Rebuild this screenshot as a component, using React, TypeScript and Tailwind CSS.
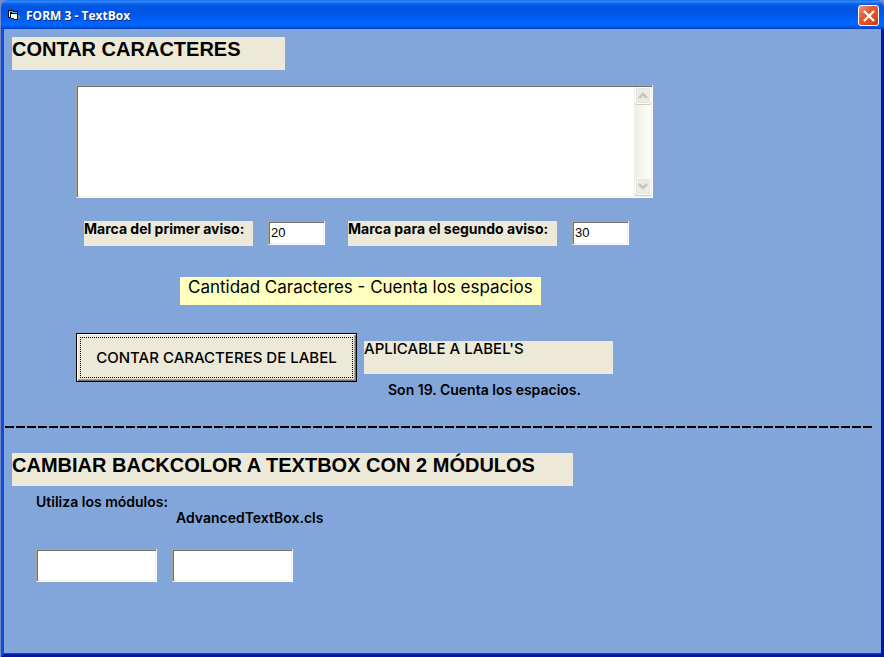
import React from "react";

const sunken =
  "border border-t-[#aca899] border-l-[#aca899] border-r-white border-b-white bg-white shadow-[inset_1px_1px_0_#716f64,inset_-1px_-1px_0_#f1efe2] outline-none";
const fieldText =
  "px-[2px] pb-[2px] font-['Liberation_Sans',sans-serif] text-[13px] leading-[18px] text-black";
const heading =
  "mt-2 ml-2 h-[33px] bg-[#ece9d8] font-['Liberation_Sans',sans-serif] text-xl leading-6 font-bold whitespace-nowrap";

function ScrollButton({ label, d }: { label: string; d: string }) {
  return (
    <button
      type="button"
      aria-label={label}
      className="flex h-[17px] w-[16px] items-center justify-center rounded-[2px] border border-white bg-[#ecebe4] shadow-[inset_0_0_0_1px_#e6e5dc,0_1px_0_#cfcdb8]"
    >
      <svg width="10" height="7" viewBox="0 0 10 7" fill="none" stroke="#c6c5bc" strokeWidth="2.6">
        <path d={d} />
      </svg>
    </button>
  );
}

function FormIcon() {
  return (
    <svg width="14" height="13" viewBox="0 0 14 13" shapeRendering="crispEdges" aria-hidden="true">
      <path d="M10 6l3 2-3 2z" fill="#8a8468" />
      <path d="M0 1h5v1h5v9H6v-1H3V9H0z" fill="#000" />
      <path d="M1 3h1v5H1zM3 5h6v5H6V9H3z" fill="#fff" />
      <path d="M1 2h4v1H1zM4 3h5v1H4z" fill="#38d6e0" />
    </svg>
  );
}

function TitleBar() {
  return (
    <header className="flex h-[29px] items-center rounded-t-[7px] bg-[linear-gradient(to_bottom,#0058e6_0px,#3a93ff_1px,#2a80f5_2px,#0762e8_4px,#0054e3_7px,#0055e5_13px,#0060f8_19px,#0066ff_24px,#0062f5_26px,#0046d0_28px,#003dbc_29px)] pt-[2px] pr-[5px] pl-[7px]">
      <FormIcon />
      <h1 className="ml-1 flex-1 font-['Open_Sans',sans-serif] text-[12px] leading-4 font-bold text-white [text-shadow:1px_1px_0_#0a2a80]">
        FORM 3 - TextBox
      </h1>
      <button
        type="button"
        aria-label="Cerrar"
        className="flex h-[21px] w-[21px] items-center justify-center rounded-[3px] border border-white bg-[linear-gradient(135deg,#eb9a80_0%,#e25a32_40%,#dd4a1c_75%,#b83a10_100%)]"
      >
        <svg width="12" height="12" viewBox="0 0 12 12" stroke="#fff" strokeWidth="2.2" aria-hidden="true">
          <path d="M1 1l10 10M11 1L1 11" />
        </svg>
      </button>
    </header>
  );
}

export default function App() {
  return (
    <div className="flex min-h-screen flex-col bg-[#7b88c8] pl-px font-[Inter,sans-serif] text-sm leading-4 font-semibold text-black">
      <TitleBar />
      <main className="flex flex-1 flex-col items-start border-x-[3px] border-b-[3px] border-r-[#0019a8] border-b-[#0019a8] border-l-[#0850e0] bg-[#83a6da] shadow-[inset_0_-1px_0_#0046e8]">
        <h2 className={"w-[273px] " + heading}>CONTAR CARACTERES</h2>

        <div className={"mt-[15px] ml-[72px] flex h-[113px] w-[577px] p-px " + sunken}>
          <textarea aria-label="Texto" className={"m-0 flex-1 resize-none overflow-hidden outline-none " + fieldText} />
          <div className="flex w-[17px] flex-col items-start justify-between bg-[linear-gradient(to_right,#eeede5,#fefefb)] pb-px pl-px">
            <ScrollButton label="Subir" d="M1 6l4-4 4 4" />
            <ScrollButton label="Bajar" d="M1 1l4 4 4-4" />
          </div>
        </div>

        <div className="mt-[23px] ml-20 flex items-start font-bold">
          <label htmlFor="first" className="h-[25px] w-[169px] bg-[#ece9d8] whitespace-nowrap">
            Marca del primer aviso:
          </label>
          <input id="first" defaultValue="20" className={"ml-[15px] h-6 w-[57px] font-normal " + sunken + " " + fieldText} />
          <label htmlFor="second" className="ml-[23px] h-[25px] w-[209px] bg-[#ece9d8] whitespace-nowrap">
            Marca para el segundo aviso:
          </label>
          <input id="second" defaultValue="30" className={"ml-[15px] h-6 w-[57px] font-normal " + sunken + " " + fieldText} />
        </div>

        <p className="mt-[31px] ml-[176px] h-7 w-[361px] bg-[#ffffc0] pl-2 text-[17px] leading-5 font-normal whitespace-nowrap">
          Cantidad Caracteres - Cuenta los espacios
        </p>

        <div className="mt-7 ml-[72px] flex items-start">
          <button
            type="button"
            className="h-[49px] w-[281px] border border-black bg-[#ece9d8] p-[3px] text-[15px] leading-4 font-medium shadow-[inset_1px_1px_0_#fff,inset_-1px_-1px_0_#716f64,inset_-2px_-2px_0_#aca899]"
          >
            <span className="flex h-full items-center justify-center border border-dotted border-black whitespace-nowrap">
              CONTAR CARACTERES DE LABEL
            </span>
          </button>
          <div className="mt-2 ml-[7px]">
            <p className="h-[33px] w-[249px] bg-[#ece9d8] text-[15px] leading-4 font-medium">APLICABLE A LABEL'S</p>
            <p className="mt-2 pl-6">Son 19. Cuenta los espacios.</p>
          </div>
        </div>

        <hr className="mt-7 mb-[17px] ml-px h-[2px] w-[calc(100%-10px)] border-0 bg-[repeating-linear-gradient(to_right,#000_0px,#000_9px,transparent_9px,transparent_11px)]" />

        <h2 className={"w-[561px] " + heading}>CAMBIAR BACKCOLOR A TEXTBOX CON 2 MÓDULOS</h2>
        <p className="mt-2 ml-8">Utiliza los módulos:</p>
        <p className="ml-[172px]">AdvancedTextBox.cls</p>
        <div className="mt-[23px] ml-8 flex gap-[15px]">
          <input aria-label="Texto 1" className={"h-[33px] w-[121px] " + sunken + " " + fieldText} />
          <input aria-label="Texto 2" className={"h-[33px] w-[121px] " + sunken + " " + fieldText} />
        </div>
      </main>
    </div>
  );
}
